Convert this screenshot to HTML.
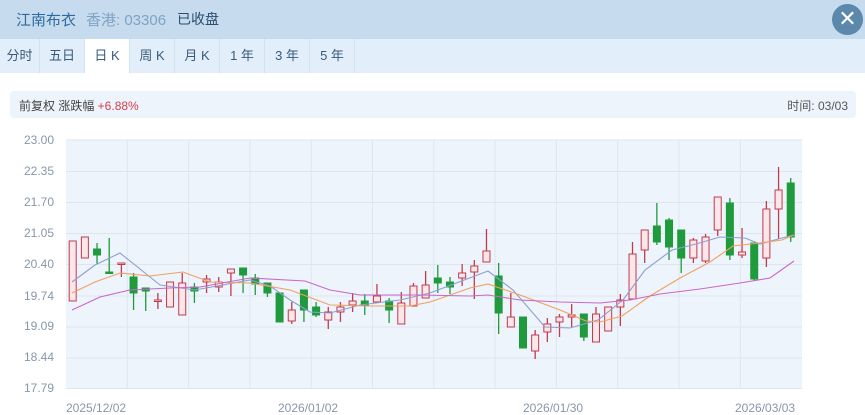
<!DOCTYPE html>
<html><head><meta charset="utf-8"><style>
body{margin:0;width:865px;height:415px;background:#fff;font-family:"Liberation Sans","Noto Sans CJK SC",sans-serif;overflow:hidden;position:relative}
.hdr{position:absolute;left:0;top:0;width:865px;height:39px;background:#c6dcee}
.t1{position:absolute;left:16px;top:9px;font-size:15px;color:#2d6aa0}
.t2{position:absolute;left:86px;top:9px;font-size:15px;color:#7fa3c4}
.t3{position:absolute;left:177px;top:9px;font-size:14px;color:#2a4d70}
.x{position:absolute;left:832px;top:4px;width:31px;height:31px;border-radius:50%;background:#5c88ab;color:#fff;font-size:22px;line-height:30px;text-align:center}
.tabs{position:absolute;left:0;top:39px;width:865px;height:34px;background:#e2eefa}
.tab{position:absolute;top:0;height:34px;line-height:34px;font-size:13px;color:#3a5a7a;text-align:center;border-right:1px solid #d2e2f0}
.tab.on{background:#fff}
.info{position:absolute;left:10px;top:91px;width:846px;height:27px;background:#eef4fb;border-radius:4px;font-size:12px;color:#444}
.lab{position:absolute;font-size:12px;color:#8797ab}
</style></head><body>
<div class="hdr"><span class="t1">江南布衣</span><span class="t2">香港: 03306</span><span class="t3">已收盘</span><div class="x">✕</div></div>
<div class="tabs">
<div class="tab" style="left:0;width:39px">分时</div>
<div class="tab" style="left:40px;width:44px">五日</div>
<div class="tab on" style="left:85px;width:44px">日 K</div>
<div class="tab" style="left:130px;width:44px">周 K</div>
<div class="tab" style="left:175px;width:44px">月 K</div>
<div class="tab" style="left:220px;width:44px">1 年</div>
<div class="tab" style="left:265px;width:44px">3 年</div>
<div class="tab" style="left:310px;width:44px">5 年</div>
</div>
<div class="info"><span style="position:absolute;left:9px;top:6px">前复权 涨跌幅 <span style="color:#d0424f">+6.88%</span></span><span style="position:absolute;right:8px;top:6px;color:#555">时间: 03/03</span></div>
<div class="lab" style="left:24px;top:133px">23.00</div>
<div class="lab" style="left:24px;top:164px">22.35</div>
<div class="lab" style="left:24px;top:195px">21.70</div>
<div class="lab" style="left:24px;top:226px">21.05</div>
<div class="lab" style="left:24px;top:257px">20.40</div>
<div class="lab" style="left:24px;top:289px">19.74</div>
<div class="lab" style="left:24px;top:319px">19.09</div>
<div class="lab" style="left:24px;top:350px">18.44</div>
<div class="lab" style="left:24px;top:381px">17.79</div>
<div class="lab" style="left:66px;top:401px">2025/12/02</div>
<div class="lab" style="left:278px;top:401px">2026/01/02</div>
<div class="lab" style="left:523px;top:401px">2026/01/30</div>
<div class="lab" style="left:735px;top:401px">2026/03/03</div>
<div class="lab" style="left:67px;top:145px;color:#8ea4d4">MA5</div>
<div class="lab" style="left:417px;top:145px;color:#f0a060">MA10</div>
<div class="lab" style="left:768px;top:145px;color:#d078d0">MA20</div>
<svg id="c" style="position:absolute;left:0;top:0" width="865" height="415"></svg>
<script>
var s='<rect x="66" y="140" width="736" height="249" fill="#eef4fb"/>';
[140,171.5,202.5,233.5,264.5,296,327,358,388.5].forEach(function(y){s+='<line x1="66" x2="802" y1="'+y+'" y2="'+y+'" stroke="#dde6ef"/>';});
for(var i=1;i<12;i++){var x=66+i*61.3;s+='<line y1="140" y2="389" x1="'+x+'" x2="'+x+'" stroke="#dde6ef"/>';}
var d=[[241,301,241,301,'r'],[237,258,237,258,'r'],[249,255,243,264,'g'],[272,273,238,273,'g'],[263,264,263,277,'r'],[277,293,273,310,'g'],[288,291,288,311,'g'],[300,301,293,309,'r'],[282,307,282,307,'r'],[283,315,273,315,'r'],[287,291,283,303,'g'],[279,282,275,293,'r'],[282,287,277,292,'r'],[269,273,269,296,'r'],[268,275,268,293,'g'],[278,284,274,295,'g'],[283,293,283,297,'g'],[293,322,293,322,'g'],[310,321,302,324,'r'],[290,310,290,322,'g'],[307,315,302,317,'g'],[312,320,307,329,'r'],[307,312,302,322,'r'],[301,305,293,312,'r'],[301,305,294,315,'g'],[296,302,284,302,'r'],[301,310,298,323,'g'],[303,324,292,324,'r'],[286,306,283,306,'r'],[285,298,271,298,'r'],[278,283,265,293,'g'],[282,287,277,294,'g'],[273,278,264,286,'r'],[266,272,260,299,'r'],[251,262,229,262,'r'],[276,313,263,334,'g'],[317,327,293,327,'r'],[317,348,317,348,'g'],[335,351,330,359,'r'],[324,332,318,342,'r'],[317,322,314,337,'r'],[315,317,304,327,'r'],[314,337,314,341,'g'],[314,342,307,342,'r'],[307,331,307,331,'r'],[300,307,294,326,'r'],[254,299,242,299,'r'],[230,250,230,263,'r'],[226,242,203,245,'g'],[220,247,218,260,'g'],[230,258,230,273,'g'],[240,258,238,263,'r'],[237,261,234,263,'r'],[197,230,197,236,'r'],[203,255,198,260,'g'],[252,255,228,258,'r'],[243,279,243,281,'g'],[209,258,201,267,'r'],[190,209,167,239,'r'],[183,237,178,242,'g']];
d.forEach(function(c,i){var x=72.7+i*12.17;var r=c[4]=='r';var col=r?'#c23a4c':'#1f9a3c';
s+='<line x1="'+x+'" x2="'+x+'" y1="'+c[2]+'" y2="'+c[3]+'" stroke="'+col+'" stroke-width="1.3"/>';
s+='<rect x="'+(x-3.5)+'" y="'+c[0]+'" width="7" height="'+Math.max(1.5,c[1]-c[0])+'" fill="'+(r?'#fbe6ea':col)+'" stroke="'+col+'" stroke-width="1"/>';});
function pl(p,col){s+='<polyline fill="none" stroke="'+col+'" stroke-width="1.1" points="'+p+'"/>';}
pl('72,282 95,265 120,253 160,285 195,290 250,280 270,286 290,300 310,312 330,313 360,305 400,300 430,293 488,271 513,290 545,327 570,328 598,320 623,300 645,270 672,250 696,244 720,237 745,238 760,244 782,238 794,235','#8c9fd0');
pl('72,293 95,282 120,273 150,276 183,272 210,282 250,283 290,290 330,305 370,306 410,306 430,302 470,288 488,284 520,295 560,310 586,321 600,322 622,316 650,296 680,278 710,262 733,246 760,243 782,240 794,235','#f0a060');
pl('72,310 100,297 130,290 170,288 200,287 250,278 305,281 330,290 360,295 420,295 470,296 488,295 520,300 560,302 600,303 630,300 660,294 700,289 740,283 770,278 794,261','#c868c8');
document.getElementById('c').innerHTML=s;
</script>
</body></html>
